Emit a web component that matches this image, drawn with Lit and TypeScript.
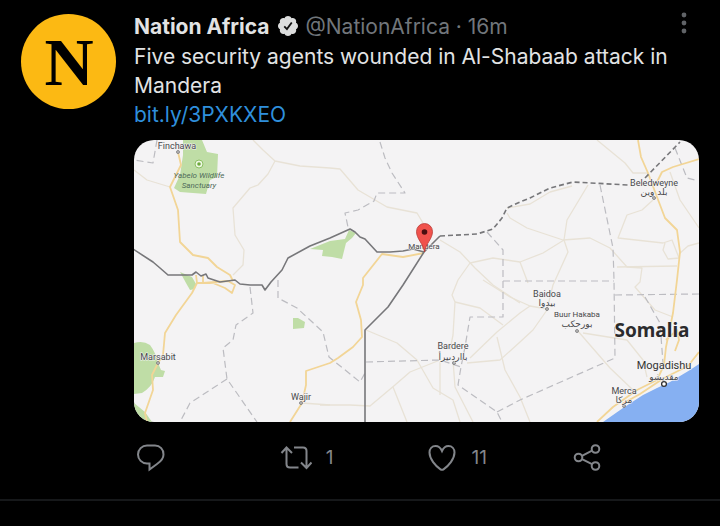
import { LitElement, html, svg, css } from "lit";
import { customElement } from "lit/decorators.js";

interface Label {
  x: number;
  y: number;
  text: string;
  kind?: string;
}

const GREENS = [
  "M183 140H202L207 152L218 154L217 177L210 180L206 194L180 192L174 188L180 175L183 155Z",
  "M180 272L192 277L196 284L195 289L190 290L186 283Z",
  "M310 249L330 241L345 239L349 230L356 233L352 238L346 243L342 259L332 257L322 256L323 250Z",
  "M293 318H298L305 322L304 328L293 329Z",
  "M134 343Q143 340 150 345Q156 353 158 363L161 370L165 371L163 377L155 377Q152 387 142 393L134 394Z",
  "M134 403L145 412L152 422H134Z",
];

const LANES = [
  "M134 170L147 180L170 187",
  "M253 140L263 150L275 161L300 166L330 168L340 169L358 190L387 207L417 213L423 223",
  "M275 161L268 174L258 185L250 188L233 208L235 235L244 250L243 265L233 275",
  "M366 330L397 343L417 360L433 388L453 400L460 422",
  "M320 405L350 405L370 406L395 385L410 372L440 360",
  "M393 387L407 422",
  "M453 360L455 387L473 422",
  "M440 362V395",
  "M450 350L453 335L455 302L452 295L458 280L470 263L493 258L520 262L543 253L564 240",
  "M440 240L460 252L475 268L493 285L520 303",
  "M455 302L480 308L503 325",
  "M467 363L500 360L520 342L533 330L547 310",
  "M470 358L497 332L520 313L530 306L510 297L483 280",
  "M530 306L547 309",
  "M497 337L505 370L520 397L530 422",
  "M507 213L510 218L527 228L563 240L590 238L610 248L627 267L642 268L640 282L635 287L655 310L673 317",
  "M507 208L530 204L550 192L572 186",
  "M588 185L567 220L564 240L568 252L553 285L547 310",
  "M520 262L528 283",
  "M597 140L625 163L633 173H648",
  "M653 200L642 210L627 215L618 238L663 243L672 240L679 258L668 259L663 250L665 243",
  "M617 267L677 266",
  "M670 172L680 200L699 228",
  "M679 254L688 246L699 243",
  "M577 330L610 368L633 390",
  "M583 333L627 340L643 360L647 377",
  "M302 403L330 405",
];

const ROADS = [
  "M178 152L181 165L170 187L178 210L180 242L193 255L208 258L217 267L230 275L233 281",
  "M196 275L197 283L192 293L176 315L165 333L163 355L158 363L152 375L153 390L145 413L147 422",
  "M197 283L213 283L225 288L232 293L235 285L228 281L203 283V275",
  "M290 422L302 403L306 385V371L330 363L338 358L353 347L362 337L361 320L356 302L363 285V278L382 254L403 257L424 253",
  "M638 140L641 157L648 173L657 197L665 218L677 230L680 252L677 280L673 313L666 347L664 365L657 380L637 390L613 407L597 422",
  "M657 182L662 172L673 167L699 159",
  "M666 340L677 330L679 340L675 351",
  "M699 352L688 366L664 378L640 394L622 404",
];

const DISTRICTS = [
  "M157 140L153 163L134 160",
  "M380 142L385 158L392 173L405 193L377 193L374 201L358 210L345 213L348 227",
  "M487 232L503 250V317H470L465 347L461 367L458 385L497 412L502 422",
  "M497 412L520 400L615 358L614 280L613 248L600 185",
  "M503 281H614",
  "M615 295L699 294",
  "M645 297L660 323L663 363",
  "M366 362L440 360L461 367",
  "M250 287L253 313L236 325L233 340L223 348L227 379L257 422",
  "M227 379L190 403L180 422",
  "M278 280V298L297 308L323 332L329 357L360 382L365 373",
  "M675 148L687 178L695 180",
];

const BORDER =
  "M133 249L153 262L160 268L168 275H192L196 272L201 276L206 274L208 278L220 282L235 280L240 284L250 285L262 285L265 290L271 282L282 270L288 258L310 246L330 238L350 229L355 232L360 237L365 239L377 252H390L403 251L413 249L424 252L440 236";

const SPOTS = [
  [178, 152],
  [158, 363],
  [301, 403],
  [654, 198],
  [547, 309],
  [577, 331],
  [454, 363],
  [624, 406],
];

const LABELS: Label[] = [
  { x: 177, y: 149, text: "Finchawa" },
  { x: 199, y: 178, text: "Yabelo Wildlife", kind: "park" },
  { x: 199, y: 188, text: "Sanctuary", kind: "park" },
  { x: 424, y: 249, text: "Mandera", kind: "small" },
  { x: 654, y: 186, text: "Beledweyne" },
  { x: 654, y: 195, text: "بلد وين", kind: "arabic" },
  { x: 547, y: 297, text: "Baidoa" },
  { x: 547, y: 306, text: "بيدوا", kind: "arabic" },
  { x: 577, y: 317, text: "Buur Hakaba", kind: "small" },
  { x: 577, y: 327, text: "بورحكب", kind: "arabic" },
  { x: 453, y: 349, text: "Bardere" },
  { x: 453, y: 360, text: "بااردىيرأ", kind: "arabic" },
  { x: 158, y: 360, text: "Marsabit" },
  { x: 301, y: 400, text: "Wajir" },
  { x: 624, y: 394, text: "Merca" },
  { x: 624, y: 403, text: "مركا", kind: "arabic" },
  { x: 664, y: 369, text: "Mogadishu", kind: "city" },
  { x: 664, y: 380, text: "مقديشو", kind: "arabic" },
  { x: 652, y: 337, text: "Somalia", kind: "country" },
];

@customElement("news-map")
export class NewsMap extends LitElement {
  static styles = css`
    :host { display: block; }
    .map {
      display: block;
      width: 100%;
      height: auto;
      border-radius: 20px;
      background: #f4f3f4;
      font-family: Roboto, "DejaVu Sans", sans-serif;
    }
    .green { fill: #bfdda6; }
    .sea { fill: #86b0f2; }
    path { stroke-linejoin: round; }
    .lane, .road, .district, .border { fill: none; }
    .lane { stroke: #e8e2d6; stroke-width: 1.3; }
    .road { stroke: #f2d596; stroke-width: 1.8; }
    .district { stroke: #bcbcc1; stroke-width: 1.2; stroke-dasharray: 7 4; }
    .border { stroke: #77777a; stroke-width: 1.6; }
    .dashed { stroke-dasharray: 5 3; }
    .spot { fill: #bbb; stroke: #77777a; stroke-width: 0.8; }
    .capital { fill: #fff; stroke: #333; stroke-width: 1.3; }
    .label {
      fill: #48484b;
      font-size: 9px;
      text-anchor: middle;
      paint-order: stroke;
      stroke: #f4f3f4;
      stroke-width: 1px;
    }
    .small { font-size: 8px; }
    .park { font-size: 8px; fill: #4f6b5a; font-style: italic; stroke: none; }
    .arabic { font-family: "DejaVu Sans", sans-serif; font-size: 9px; }
    .city { fill: #333; font-size: 11px; }
    .country {
      fill: #2b2b2d;
      font-family: "Noto Sans", sans-serif;
      font-size: 19px;
      font-weight: 700;
    }
  `;

  render() {
    return html`
      <svg class="map" viewBox="134 140 565 282" role="img" aria-label="Map of Mandera">
        ${GREENS.map((d) => svg`<path class="green" d=${d} />`)}
        <path class="sea" d="M699 364L690 370L670 382L657 388L643 395L623 408L603 422H699Z" />
        ${LANES.map((d) => svg`<path class="lane" d=${d} />`)}
        ${DISTRICTS.map((d) => svg`<path class="district" d=${d} />`)}
        ${ROADS.map((d) => svg`<path class="road" d=${d} />`)}
        <path class="border" d=${BORDER} />
        <path class="border" d="M424 252L403 285L388 307L365 330V422" />
        <path
          class="border dashed"
          d="M440 236L477 234L493 229L502 218L507 208L520 202L530 198L550 188L573 182L628 185M645 178L680 142"
        />
        ${SPOTS.map(([x, y]) => svg`<circle class="spot" cx=${x} cy=${y} r="1.5" />`)}
        <circle cx="199" cy="164" r="4" fill="#eef8e4" stroke="#8cc063" />
        <circle cx="199" cy="164" r="1.8" fill="#6ea83d" />
        ${LABELS.map(
          (l) => svg`<text class="label ${l.kind ?? ""}" x=${l.x} y=${l.y}>${l.text}</text>`
        )}
        <circle class="capital" cx="664" cy="384" r="2.4" />
        <path
          d="M424.500 252C423 243 416.500 239 416.500 231.500A8 8 0 0 1 432.500 231.500C432.500 239 426 243 424.500 252Z"
          fill="#f0524c"
          stroke="#b93a35"
          stroke-width="0.8"
        />
        <circle cx="424.500" cy="232" r="2.800" fill="#4a0f10" />
      </svg>
    `;
  }
}

@customElement("app-root")
export class AppRoot extends LitElement {
  static styles = css`
    :host {
      display: block;
      min-height: 100vh;
      background: #000;
      color: #e2e3e4;
      font-family: Inter, "Liberation Sans", sans-serif;
      font-size: 21px;
      line-height: 29px;
    }
    .post {
      display: flex;
      gap: 18px;
      padding: 12px 21px 26px;
      border-bottom: 2px solid #16181a;
    }
    .avatar { flex: none; width: 95px; height: 95px; margin-top: 2px; }
    .initial {
      font-family: "Liberation Serif", serif;
      font-size: 68px;
      font-weight: 700;
      text-anchor: middle;
    }
    .body { flex: 1; min-width: 0; }
    .head { display: flex; align-items: center; gap: 8px; height: 28px; }
    .name { font-weight: 700; }
    .meta { color: #71767b; }
    .badge { flex: none; width: 20px; height: 20px; }
    .text { margin: 2px 0 0; }
    .link { color: #2f8fdc; text-decoration: none; }
    button {
      display: flex;
      align-items: center;
      padding: 0;
      border: 0;
      background: none;
      color: #83868b;
      font: inherit;
      cursor: pointer;
    }
    .more { margin-left: auto; }
    .dots { width: 30px; height: 30px; fill: #606367; }
    .media { margin-top: 11px; }
    .actions {
      display: grid;
      grid-template-columns: 8fr 8fr 8fr 7fr;
      margin-top: 19px;
      font-size: 19px;
    }
    .action { gap: 14px; }
    .icon {
      width: 32px;
      height: 32px;
      fill: none;
      stroke: currentColor;
      stroke-width: 2;
    }
  `;

  render() {
    return html`
      <article class="post">
        <svg class="avatar" viewBox="0 0 95 95" role="img" aria-label="Nation Africa">
          <circle cx="47.500" cy="47.500" r="47.500" fill="#fcb913" />
          <text class="initial" x="48" y="71">N</text>
        </svg>
        <div class="body">
          <div class="head">
            <span class="name">Nation Africa</span>
            <svg class="badge" viewBox="0 0 24 24" role="img" aria-label="Verified">
              <path
                fill="#dcdddd"
                d="M24 12c0-1.700-1-3.200-2.400-3.900.5-1.500.2-3.200-1-4.400s-2.900-1.500-4.400-1C15.500 1 13.900 0 12 0S8.500 1 7.800 2.700c-1.500-.5-3.200-.2-4.400 1s-1.500 2.900-1 4.400C1 8.800 0 10.300 0 12s1 3.200 2.400 3.900c-.5 1.500-.2 3.200 1 4.400s2.900 1.500 4.400 1C8.500 23 10.100 24 12 24s3.500-1 4.200-2.700c1.500.5 3.200.2 4.400-1s1.500-2.900 1-4.400C23 15.200 24 13.700 24 12z"
              />
              <path d="M7.500 12.500l3.200 3.200 5.800-8" fill="none" stroke="#111" stroke-width="2.200" />
            </svg>
            <span class="meta">@NationAfrica · 16m</span>
            <button class="more" aria-label="More">
              <svg class="dots" viewBox="0 0 30 30">
                <circle cx="15" cy="4" r="2.400" />
                <circle cx="15" cy="12" r="2.400" />
                <circle cx="15" cy="20" r="2.400" />
              </svg>
            </button>
          </div>
          <p class="text">
            Five security agents wounded in Al-Shabaab attack in Mandera<br />
            <a class="link" href="https://bit.ly/3PXKXEO">bit.ly/3PXKXEO</a>
          </p>
          <news-map class="media"></news-map>
          <div class="actions">
            <button class="action" aria-label="Reply">
              <svg class="icon" viewBox="0 0 32 32">
                <path d="M13 4.500h8a8.500 8.500 0 0 1 8.500 9c0 4-2.500 6.800-6.500 9.500L15.500 28.500v-6H13a9 9 0 0 1 0-18z" />
              </svg>
            </button>
            <button class="action" aria-label="Repost">
              <svg class="icon" viewBox="0 0 32 32">
                <path d="M1.500 12L6.500 6.500 12 12M6.500 7v16q0 3.500 3.500 3.500h8.500M14 6.500h9q3.500 0 3.500 3.500v16M21 21.500l5.500 5.500 5-5.500" />
              </svg>
              <span>1</span>
            </button>
            <button class="action" aria-label="Like">
              <svg class="icon" viewBox="0 0 32 32">
                <path d="M16 10C14.500 6.500 12 5 9.500 5 6 5 3.500 7.800 3.500 11.500 3.500 18 9.500 25 14.500 28.300q1.500 1 3 0C22.500 25 28.500 18 28.500 11.500 28.500 7.800 26 5 22.500 5 20 5 17.500 6.500 16 10z" />
              </svg>
              <span>11</span>
            </button>
            <button class="action" aria-label="Share">
              <svg class="icon" viewBox="0 0 32 32">
                <circle cx="7.500" cy="16.500" r="3.800" />
                <circle cx="24.500" cy="8" r="3.800" />
                <circle cx="24.500" cy="25" r="3.800" />
                <path d="M11 14.800L21 9.700M11 18.200l10 5" />
              </svg>
            </button>
          </div>
        </div>
      </article>
    `;
  }
}
